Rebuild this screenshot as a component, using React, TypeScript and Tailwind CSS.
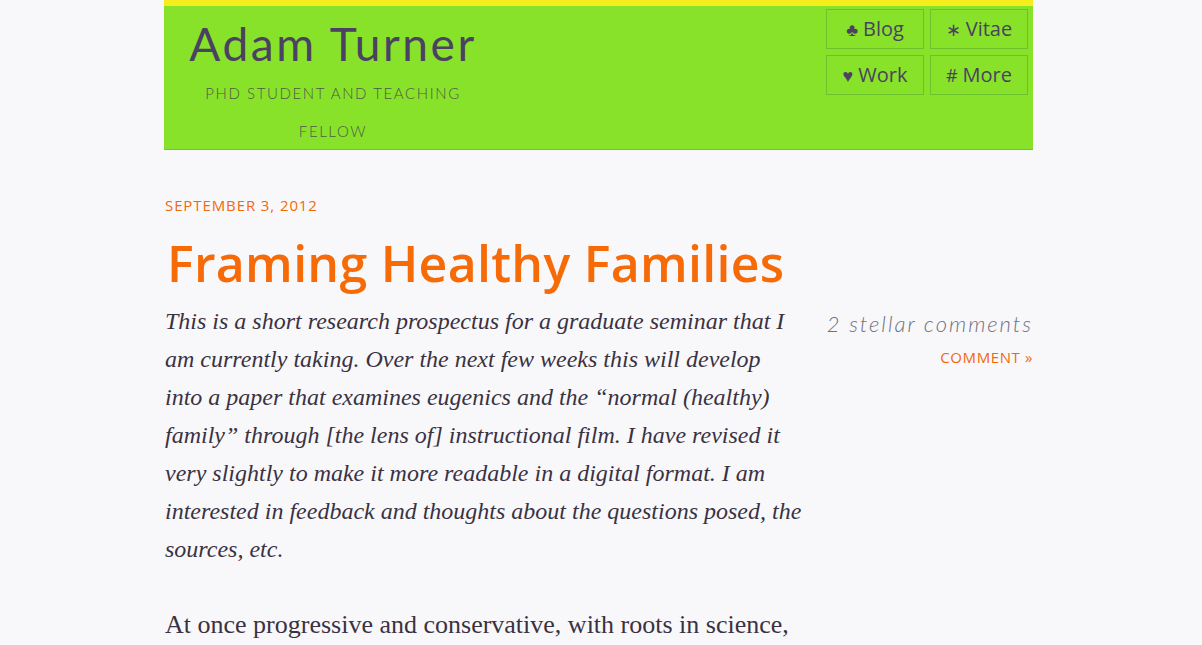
const navItems = [
  { icon: "♣", label: "Blog" },
  { icon: "∗", label: "Vitae" },
  { icon: "♥", label: "Work" },
  { icon: "#", label: "More" },
];

const intro = [
  "This is a short research prospectus for a graduate seminar that I",
  "am currently taking. Over the next few weeks this will develop",
  "into a paper that examines eugenics and the \u201cnormal (healthy)",
  "family\u201d through [the lens of] instructional film. I have revised it",
  "very slightly to make it more readable in a digital format. I am",
  "interested in feedback and thoughts about the questions posed, the",
  "sources, etc.",
];

const Header = () => {
  return (
    <header className="border-t-[6px] border-[#f5ee1c] bg-[#88e22a] border-b border-b-[#72c82a] h-[150px] flex justify-between">
      <div className="w-[290px] ml-[24px] pt-[12px] text-center font-['Lato',sans-serif]">
        <h1 className="whitespace-nowrap text-[46px] leading-[52px] font-normal tracking-[2.6px] text-[#4a4260]">
          Adam Turner
        </h1>
        <p className="mt-[4px] text-[15px] leading-[38px] font-light tracking-[1.6px] text-[#4f5a45] uppercase">
          PhD Student and Teaching Fellow
        </p>
      </div>
      <nav className="grid grid-cols-[98px_98px] gap-[6px] pt-[3px] pr-[5px] h-fit">
        {navItems.map((item) => (
          <a
            key={item.label}
            className="h-[40px] border border-[#6cc22c] flex items-center justify-center gap-[5px] text-[20px] text-[#4a4260] font-['Open_Sans',sans-serif]"
          >
            <span className="text-[18px]">{item.icon}</span>
            {item.label}
          </a>
        ))}
      </nav>
    </header>
  );
};

export default function App() {
  return (
    <div className="min-h-screen bg-[#f8f8fb]">
      <div className="w-[869px] ml-[164px]">
        <Header />
        <div className="flex">
          <main className="w-[642px] pt-[45px] pl-px">
            <p className="text-[15px] leading-[20px] tracking-[0.9px] text-[#f06a0c] uppercase font-['Open_Sans',sans-serif]">
              September 3, 2012
            </p>
            <h2 className="mt-[18px] pl-[2px] text-[50px] leading-[60px] font-semibold tracking-[0.3px] text-[#f66a08] font-['Open_Sans',sans-serif]">
              Framing Healthy Families
            </h2>
            <p className="mt-[9px] text-[24px] leading-[38px] italic text-[#3a3242] font-['Liberation_Serif',serif]">
              {intro.map((line) => (
                <span key={line} className="block whitespace-nowrap">
                  {line}
                </span>
              ))}
            </p>
            <p className="mt-[38px] text-[26px] leading-[38px] text-[#3a3242] font-['Liberation_Serif',serif]">
              At once progressive and conservative, with roots in science,
            </p>
          </main>
          <aside className="flex-1 pt-[160px] text-right">
            <p className="text-[22px] leading-[28px] italic font-light tracking-[2px] text-[#707080] font-['Lato',sans-serif]">
              2 stellar comments
            </p>
            <a className="block mt-[9px] text-[15px] leading-[20px] tracking-[0.6px] text-[#f06a0c] uppercase font-['Open_Sans',sans-serif]">
              Comment »
            </a>
          </aside>
        </div>
      </div>
    </div>
  );
}
